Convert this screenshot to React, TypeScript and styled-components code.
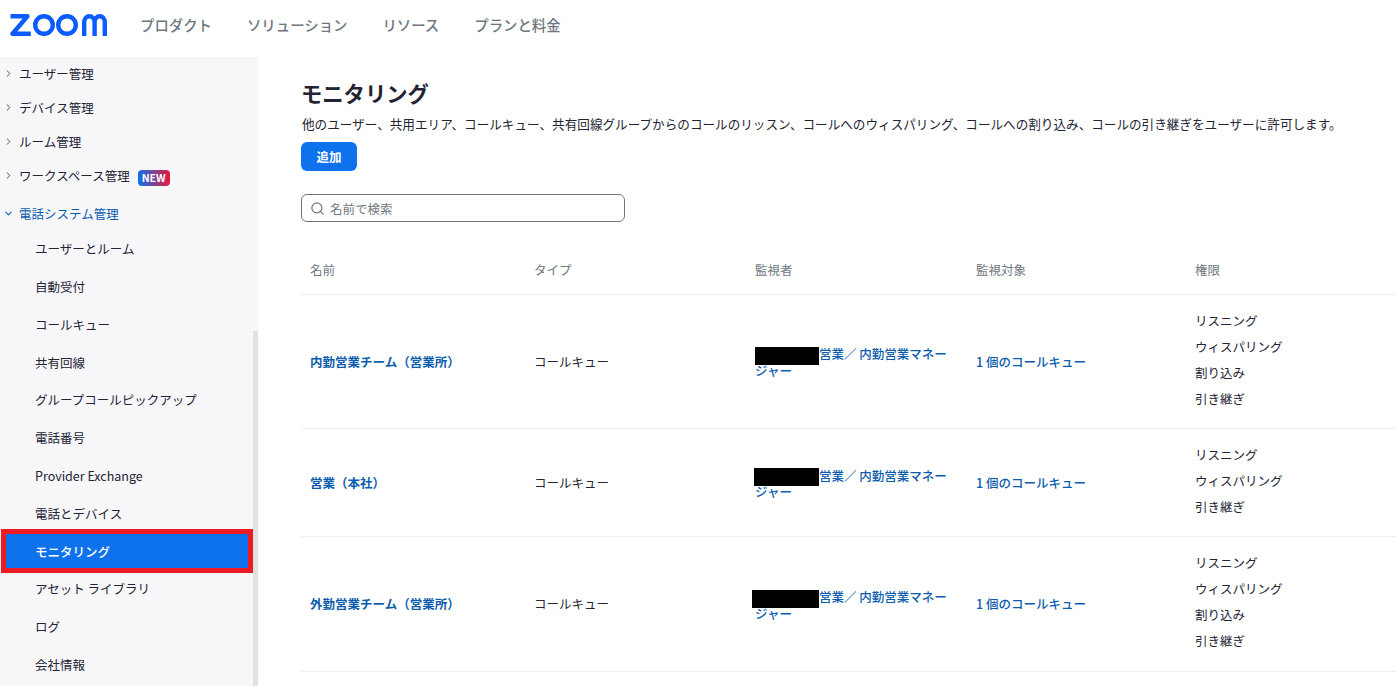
import React from "react";
import styled, { createGlobalStyle } from "styled-components";
import { ChevronDown, ChevronRight, Search } from "lucide-react";

const GlobalStyle = createGlobalStyle`
    html, body {
        margin: 0;
        height: 100%;
        overflow: hidden;
        background: #fff;
    }
    body {
        font-family: "Noto Sans CJK JP", "Noto Sans", sans-serif;
        font-size: 12.5px;
        color: #232333;
    }
`;

const Page = styled.div`
    width: 1396px;
    height: 686px;
    display: flex;
    flex-direction: column;
    overflow: hidden;
`;

const Header = styled.header`
    height: 57px;
    box-sizing: border-box;
    flex: none;
    display: flex;
    align-items: center;
    padding: 0 0 8px 10px;
`;

const Nav = styled.nav`
    display: flex;
    gap: 35px;
    margin-left: 32px;
`;

const NavItem = styled.a`
    font-size: 14.4px;
    color: #6e7680;
    font-weight: 500;
`;

const Body = styled.div`
    flex: 1;
    display: flex;
    min-height: 0;
`;

const Sidebar = styled.aside`
    position: relative;
    width: 258px;
    flex: none;
    background: #f7f7fa;
    overflow: hidden;
`;

const ScrollThumb = styled.div`
    position: absolute;
    right: 0;
    top: 274px;
    bottom: 0;
    width: 5px;
    background: #e2e2e2;
`;

const GroupRow = styled.div<{ $open?: boolean }>`
    box-sizing: border-box;
    height: ${(p) => (p.$open ? 35 : 34)}px;
    margin-top: ${(p) => (p.$open ? 2 : 0)}px;
    padding: ${(p) => (p.$open ? "2px 0 0 3px" : "0 0 2px 3px")};
    display: flex;
    align-items: center;
    gap: 5px;
    color: ${(p) => (p.$open ? "#0b5cad" : "#232333")};
    svg {
        color: ${(p) => (p.$open ? "#0b5cad" : "#6e7680")};
        flex: none;
    }
`;

const NewBadge = styled.span`
    margin: 5px 0 0 3px;
    width: 32px;
    height: 16px;
    border-radius: 4px;
    background: linear-gradient(90deg, #0e72ed, #e8173c);
    color: #fff;
    font-size: 10.5px;
    font-weight: 700;
    line-height: 16px;
    text-align: center;
`;

const SubItem = styled.div<{ $active?: boolean }>`
    position: relative;
    height: 37.75px;
    display: flex;
    align-items: center;
    padding-left: 35px;
    color: ${(p) => (p.$active ? "#fff" : "#232333")};
    font-weight: ${(p) => (p.$active ? 500 : 400)};
    background: ${(p) => (p.$active ? "#0e72ed" : "transparent")};
    ${(p) =>
        p.$active &&
        `
        margin: 0 5px 0 1px;
        padding: 1px 0 0 34px;
        box-sizing: border-box;
        &::after {
            content: "";
            position: absolute;
            inset: -3px 0;
            border: 5px solid #ed1c24;
        }
    `}
`;

const Main = styled.main`
    flex: 1;
    min-width: 0;
    padding: 21px 0 0 43px;
`;

const Title = styled.h1`
    margin: 0;
    font-size: 21.3px;
    line-height: 30px;
    font-weight: 700;
    color: #232333;
`;

const Description = styled.p`
    margin: 7px 0 0 1px;
    font-size: 12.6px;
    line-height: 18px;
`;

const AddButton = styled.button`
    display: block;
    margin-top: 9px;
    width: 56px;
    height: 29px;
    border: none;
    border-radius: 6px;
    padding: 0;
    background: #0e72ed;
    color: #fff;
    font: 700 12.5px "Noto Sans CJK JP", sans-serif;
`;

const SearchBox = styled.div`
    margin-top: 23px;
    width: 324px;
    height: 28px;
    box-sizing: border-box;
    border: 1px solid #6e7680;
    border-radius: 6px;
    display: flex;
    align-items: center;
    gap: 5px;
    padding-left: 8px;
    color: #6e7680;
`;

const Table = styled.table`
    margin-top: 23px;
    width: 1095px;
    table-layout: fixed;
    border-collapse: collapse;
`;

const HeadCell = styled.th<{ $width: number }>`
    width: ${(p) => p.$width}px;
    height: 49px;
    box-sizing: border-box;
    padding: 0 0 0 9px;
    border-bottom: 1px solid #ededf4;
    text-align: left;
    font-weight: 400;
    color: #6e7680;
`;

const Cell = styled.td`
    padding: 0 9px;
    border-bottom: 1px solid #ededf4;
    vertical-align: middle;
`;

const PermissionCell = styled(Cell)`
    padding: 13px 9px 16.4px;
`;

const NameLink = styled.a`
    color: #0b5cad;
    font-weight: 700;
`;

const MonitorLink = styled.a`
    display: block;
    padding-top: 3px;
    color: #0b5cad;
    font-weight: 500;
    line-height: 16px;
`;

const TargetLink = styled.a`
    color: #0b5cad;
    font-weight: 500;
`;

const Redacted = styled.span<{ $shift: number }>`
    display: inline-block;
    width: ${(p) => 64 - p.$shift}px;
    height: 18px;
    margin: -2px 0 -2px ${(p) => p.$shift}px;
    background: #000;
    vertical-align: -3.5px;
`;

const Permission = styled.div`
    line-height: 26px;
`;

const ZoomLogo = () => (
    <svg width="98" height="22" viewBox="0 0 98 22" fill="none" stroke="#0b5cff" strokeWidth="4.4">
        <path d="M0.500 2.200H17.500L2.500 19.800H20.800" strokeLinejoin="round" />
        <circle cx="34" cy="11" r="8.800" />
        <circle cx="57" cy="11" r="8.800" />
        <path d="M74.200 22V8a5.200 5.800 0 0 1 10.400 0V22M84.600 8a5.100 5.800 0 0 1 10.200 0V22" />
    </svg>
);

const groups = ["ユーザー管理", "デバイス管理", "ルーム管理"];

const subItems = [
    "ユーザーとルーム",
    "自動受付",
    "コールキュー",
    "共有回線",
    "グループコールピックアップ",
    "電話番号",
    "Provider Exchange",
    "電話とデバイス",
    "モニタリング",
    "アセット ライブラリ",
    "ログ",
    "会社情報",
];

const allPermissions = ["リスニング", "ウィスパリング", "割り込み", "引き継ぎ"];

const rows = [
    { name: "内勤営業チーム\uFF08営業所\uFF09", shift: 0, permissions: allPermissions },
    { name: "営業\uFF08本社\uFF09", shift: -1, permissions: ["リスニング", "ウィスパリング", "引き継ぎ"] },
    { name: "外勤営業チーム\uFF08営業所\uFF09", shift: -3, permissions: allPermissions },
];

const App = () => (
    <Page>
        <GlobalStyle />
        <Header>
            <ZoomLogo />
            <Nav>
                <NavItem>プロダクト</NavItem>
                <NavItem>ソリューション</NavItem>
                <NavItem>リソース</NavItem>
                <NavItem>プランと料金</NavItem>
            </Nav>
        </Header>
        <Body>
            <Sidebar>
                {groups.map((g) => (
                    <GroupRow key={g}>
                        <ChevronRight size={11} strokeWidth={2.2} />
                        {g}
                    </GroupRow>
                ))}
                <GroupRow>
                    <ChevronRight size={11} strokeWidth={2.2} />
                    ワークスペース管理
                    <NewBadge>NEW</NewBadge>
                </GroupRow>
                <GroupRow $open>
                    <ChevronDown size={11} strokeWidth={2.2} />
                    電話システム管理
                </GroupRow>
                {subItems.map((s) => (
                    <SubItem key={s} $active={s === "モニタリング"}>
                        {s}
                    </SubItem>
                ))}
                <ScrollThumb />
            </Sidebar>
            <Main>
                <Title>モニタリング</Title>
                <Description>
                    他のユーザー、共用エリア、コールキュー、共有回線グループからのコールのリッスン、コールへのウィスパリング、コールへの割り込み、コールの引き継ぎをユーザーに許可します。
                </Description>
                <AddButton>追加</AddButton>
                <SearchBox>
                    <Search size={15} />
                    名前で検索
                </SearchBox>
                <Table>
                    <thead>
                        <tr>
                            <HeadCell $width={224}>名前</HeadCell>
                            <HeadCell $width={221}>タイプ</HeadCell>
                            <HeadCell $width={221}>監視者</HeadCell>
                            <HeadCell $width={219}>監視対象</HeadCell>
                            <HeadCell $width={210}>権限</HeadCell>
                        </tr>
                    </thead>
                    <tbody>
                        {rows.map((r) => (
                            <tr key={r.name}>
                                <Cell>
                                    <NameLink>{r.name}</NameLink>
                                </Cell>
                                <Cell>コールキュー</Cell>
                                <Cell>
                                    <MonitorLink>
                                        <Redacted $shift={r.shift} />
                                        {"営業\uFF0F 内勤営業マネージャー"}
                                    </MonitorLink>
                                </Cell>
                                <Cell>
                                    <TargetLink>1 個のコールキュー</TargetLink>
                                </Cell>
                                <PermissionCell>
                                    {r.permissions.map((p) => (
                                        <Permission key={p}>{p}</Permission>
                                    ))}
                                </PermissionCell>
                            </tr>
                        ))}
                    </tbody>
                </Table>
            </Main>
        </Body>
    </Page>
);

export default App;
